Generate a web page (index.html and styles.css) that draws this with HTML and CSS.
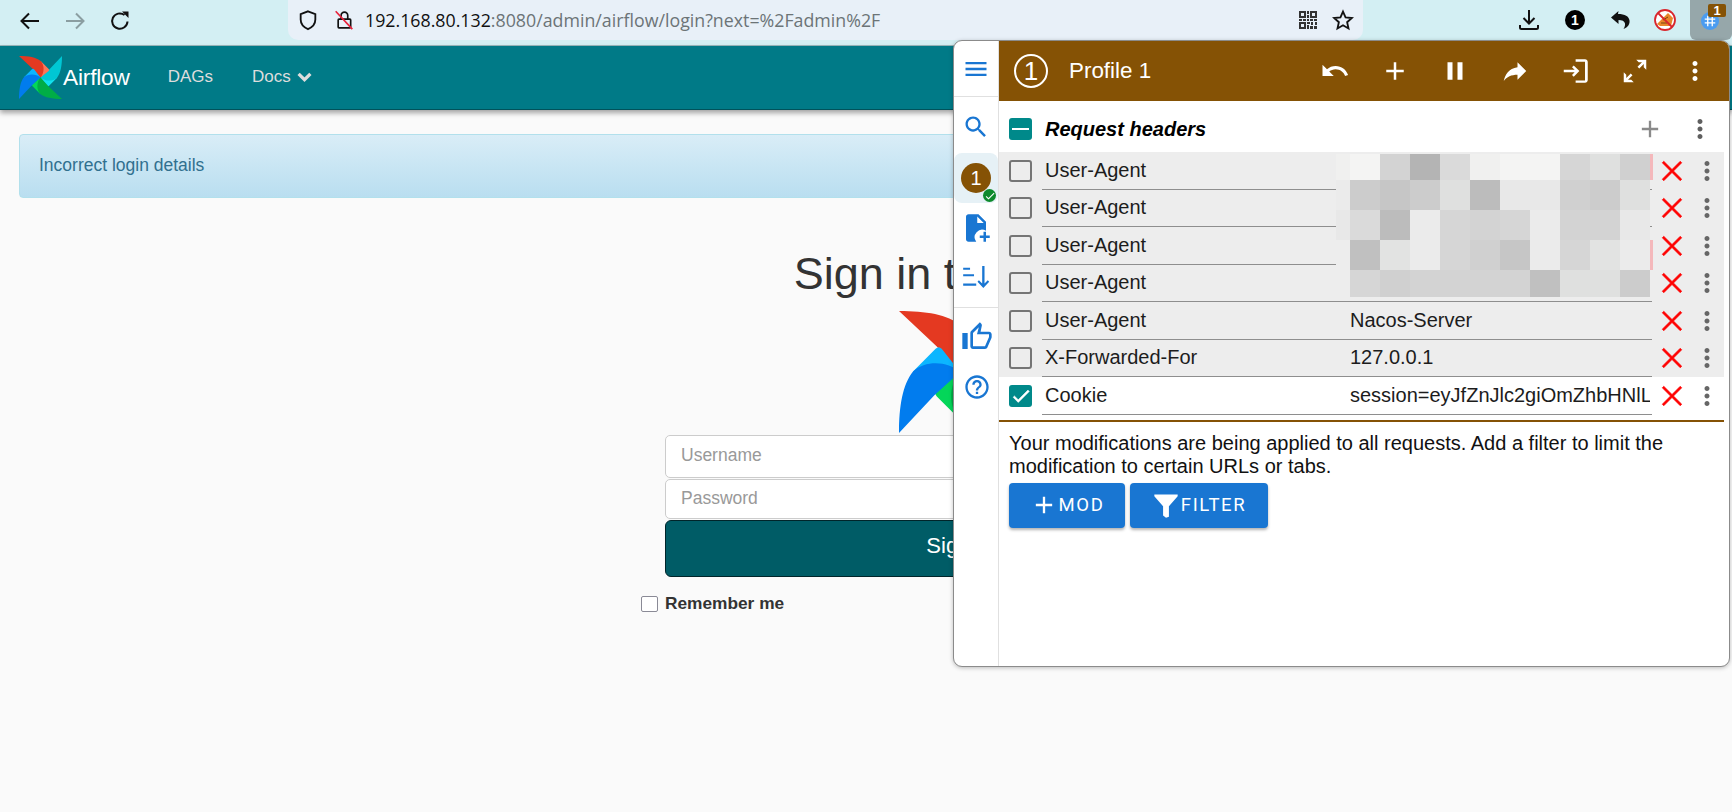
FILE: index.html
```html
<!DOCTYPE html>
<html lang="en">
<head>
<meta charset="utf-8">
<title>Airflow</title>
<link rel="stylesheet" href="styles.css">
</head>
<body>
<svg class="sprite" xmlns="http://www.w3.org/2000/svg">
  <defs>
    <symbol id="i-menu" viewBox="0 0 24 24"><path d="M3 18h18v-2H3v2zm0-5h18v-2H3v2zm0-7v2h18V6H3z"/></symbol>
    <symbol id="i-search" viewBox="0 0 24 24"><path d="M15.5 14h-.79l-.28-.27C15.41 12.59 16 11.11 16 9.5 16 5.91 13.09 3 9.5 3S3 5.91 3 9.5 5.91 16 9.5 16c1.61 0 3.09-.59 4.23-1.57l.27.28v.79l5 4.99L20.49 19l-4.99-5zm-6 0C7.01 14 5 11.99 5 9.5S7.01 5 9.5 5 14 7.01 14 9.5 11.99 14 9.5 14z"/></symbol>
    <symbol id="i-file" viewBox="0 0 24 24"><path d="M6 1h8l6 6v7.2a6 6 0 0 0-7.8 8.8H6c-1.1 0-2-.9-2-2V3c0-1.100.9-2 2-2zm7 1.800V8h5.200L13 2.800z"/><path d="M18 15h2v3h3v2h-3v3h-2v-3h-3v-2h3z"/></symbol>
    <symbol id="i-sort" viewBox="0 0 24 24"><path d="M1 4h5.900v1.800H1zM1 9.600h9.300v1.800H1zM1 17.600h11.200v1.800H1zM17.300 2.600h2v15l2.800-2.800 1.200 1.300-5 5.300-5-5.300 1.200-1.300 2.800 2.800z"/></symbol>
    <symbol id="i-thumb" viewBox="0 0 24 24"><path d="M9 21h9c.83 0 1.54-.5 1.84-1.22l3.02-7.05c.09-.23.14-.47.14-.73v-2c0-1.100-.9-2-2-2h-6.310l.95-4.570.03-.32c0-.41-.17-.79-.44-1.060L14.170 1 7.580 7.590C7.220 7.950 7 8.450 7 9v10c0 1.100.9 2 2 2zM9 9l4.340-4.340L12 10h9v2l-3 7H9V9zM1 9h4v12H1z"/></symbol>
    <symbol id="i-help" viewBox="0 0 24 24"><path d="M11 18h2v-2h-2v2zm1-16C6.480 2 2 6.480 2 12s4.480 10 10 10 10-4.480 10-10S17.520 2 12 2zm0 18c-4.410 0-8-3.590-8-8s3.590-8 8-8 8 3.590 8 8-3.590 8-8 8zm0-14c-2.210 0-4 1.790-4 4h2c0-1.100.9-2 2-2s2 .9 2 2c0 2-3 1.750-3 5h2c0-2.250 3-2.500 3-5 0-2.210-1.790-4-4-4z"/></symbol>
    <symbol id="i-undo" viewBox="0 0 24 24"><path d="M12.500 8c-2.650 0-5.050.99-6.900 2.600L2 7v9h9l-3.620-3.620c1.390-1.160 3.160-1.880 5.120-1.880 3.540 0 6.550 2.310 7.600 5.500l2.370-.78C21.080 11.030 17.150 8 12.500 8z"/></symbol>
    <symbol id="i-add" viewBox="0 0 24 24"><path d="M19 13h-6v6h-2v-6H5v-2h6V5h2v6h6v2z"/></symbol>
    <symbol id="i-pause" viewBox="0 0 24 24"><path d="M6 19h4V5H6v14zm8-14v14h4V5h-4z"/></symbol>
    <symbol id="i-redo" viewBox="0 0 24 24"><path d="M14 9V5l7 7-7 7v-4.100c-5 0-8.500 1.600-11 5.100 1-5 4-10 11-11z"/></symbol>
    <symbol id="i-login" viewBox="0 0 24 24"><path d="M11 7.500 9.600 8.900l2.100 2.100H3v2h8.700l-2.100 2.100 1.400 1.400 4.500-4.500zM20 19.500h-7.500v1.900H20c1.200 0 2.200-1 2.200-2.200V4.800c0-1.200-1-2.200-2.200-2.200h-7.500v1.900H20z"/></symbol>
    <symbol id="i-expand" viewBox="0 0 24 24"><path d="M13 3h8v8l-2-2V6.400l-3.600 3.600-1.400-1.400L17.600 5H15zM11 21H3v-8l2 2v2.600L8.600 14l1.400 1.400L6.400 19H9z"/></symbol>
    <symbol id="i-more" viewBox="0 0 24 24"><path d="M12 8c1.100 0 2-.9 2-2s-.9-2-2-2-2 .9-2 2 .9 2 2 2zm0 2c-1.100 0-2 .9-2 2s.9 2 2 2 2-.9 2-2-.9-2-2-2zm0 6c-1.100 0-2 .9-2 2s.9 2 2 2 2-.9 2-2-.9-2-2-2z"/></symbol>
    <symbol id="i-close" viewBox="0 0 24 24"><path d="M21 4.400 19.600 3 12 10.600 4.400 3 3 4.400 10.600 12 3 19.600 4.400 21 12 13.400 19.600 21 21 19.600 13.400 12z"/></symbol>
    <symbol id="i-filter" viewBox="0 0 24 24"><path d="M2 3h20v1.500L14.500 13v9L12 23l-2.500-2v-8L2 4.500z"/></symbol>
    <symbol id="i-check" viewBox="0 0 24 24"><path d="M9 16.170 4.830 12l-1.420 1.410L9 19 21 7l-1.410-1.410z"/></symbol>
    <g id="blade-blue"><path fill="#0cb6ff" d="M11.500 49.500 30 31q2.500-2.500 5 0l15 19-38.500 0z"/><path fill="#017cee" d="M0 100C0 78 3 60 11.500 49.500 22 40 40 41 50 50L29 69z"/></g>
    <g id="blade-red"><path fill="#ff7557" d="M11.500 49.500 30 31q2.500-2.500 5 0l15 19-38.500 0z"/><path fill="#e43921" d="M0 100C0 78 3 60 11.500 49.500 22 40 40 41 50 50L29 69z"/></g>
    <g id="blade-green"><path fill="#04d659" d="M11.500 49.500 30 31q2.500-2.500 5 0l15 19-38.500 0z"/><path fill="#00ad46" d="M0 100C0 78 3 60 11.500 49.500 22 40 40 41 50 50L29 69z"/></g>
    <g id="blade-teal"><path fill="#11e1ee" d="M11.500 49.500 30 31q2.500-2.500 5 0l15 19-38.500 0z"/><path fill="#00c7d4" d="M0 100C0 78 3 60 11.500 49.500 22 40 40 41 50 50L29 69z"/></g>
    <symbol id="logo" viewBox="0 0 100 100">
      <use href="#blade-teal" transform="rotate(180 50 50)"/>
      <use href="#blade-red" transform="rotate(90 50 50)"/>
      <use href="#blade-green" transform="rotate(-90 50 50)"/>
      <use href="#blade-blue"/>
    </symbol>
  </defs>
</svg>

<header class="chrome">
  <div class="nav-buttons">
    <svg class="chrome-icon" viewBox="0 0 24 24"><path class="stroke" d="M21 12H3.500M11 4.500 3.500 12l7.500 7.500"/></svg>
    <svg class="chrome-icon is-disabled" viewBox="0 0 24 24"><path class="stroke" d="M3 12h17.500M13 4.500l7.500 7.500-7.500 7.500"/></svg>
    <svg class="chrome-icon" viewBox="0 0 24 24"><path class="stroke" d="M19.500 12.500A7.700 7.700 0 1 1 16.500 6"/><path d="M14 2.500h6.500V9z"/></svg>
  </div>
  <div class="omnibox">
    <svg class="shield" viewBox="0 0 24 24"><path class="stroke" d="M12 2.500 20 5.500v6c0 5-3.500 8.500-8 10.500-4.500-2-8-5.500-8-10.500v-6z"/></svg>
    <svg class="lock" viewBox="0 0 24 24"><path class="stroke" d="M8.500 11V6.500a4 4 0 0 1 8 0V11M5 12q0-1 1-1h13q1 0 1 1v8.500q0 1-1 1H6q-1 0-1-1z"/><path class="slash" d="M2 1.500 22 23"/></svg>
    <span class="url"><span class="url-host">192.168.80.132</span>:8080/admin/airflow/login?next=%2Fadmin%2F</span>
    <span class="omni-end">
      <svg class="qr" viewBox="0 0 18 18"><path d="M0 0h7v7H0zm2 2v3h3V2zM11 0h7v7h-7zm2 2v3h3V2zM0 11h7v7H0zm2 2v3h3v-3zM8 0h2v3H8zM8 4h2v3H8zM0 8h3v2H0zM4 8h3v2H4zM8 8h2v2H8zM11 8h3v2h-3zM15 8h3v2h-3zM8 11h3v2H8zM12 11h2v3h-2zM16 11h2v3h-2zM8 14h2v4H8zM11 15h3v3h-3zM15 15h3v3h-3z"/></svg>
      <svg class="star" viewBox="0 0 24 24"><path class="stroke" d="M12 2.800l2.800 6.300 6.900.7-5.200 4.600 1.500 6.800-6-3.500-6 3.500 1.500-6.800-5.200-4.600 6.900-.7z"/></svg>
    </span>
  </div>
  <div class="extensions">
    <svg class="ext-icon" viewBox="0 0 24 24"><path class="stroke" d="M12 2v13M6.500 10l5.500 5.500 5.500-5.500M3 17v2.500q0 1.500 1.500 1.500h15q1.500 0 1.500-1.500V17"/></svg>
    <span class="ext-one">1</span>
    <svg class="ext-icon" viewBox="0 0 24 24"><path d="M10.500 3 3 9.500l7.500 6.500v-4c3.500 0 6 1 6.500 3.500.3 2-.4 3.700-1.500 5.500 4.500-1.500 6.500-5 6-8.500-.6-4.200-4.500-6.500-11.500-6.500z"/></svg>
    <svg class="ext-icon" viewBox="0 0 24 24"><circle cx="12" cy="12" r="10" fill="#fff"/><path d="M4 16 15 5l5 5-2 8H7z" fill="#e8862a"/><path d="M8 15h6M10 12l5-3" stroke="#7a4510" stroke-width="1" fill="none"/><circle cx="12" cy="12" r="10" fill="none" stroke="#d9262c" stroke-width="1.800"/><path d="M5 5l14 14" stroke="#d9262c" stroke-width="1.800"/></svg>
    <span class="ext-active">
      <svg class="ext-globe" viewBox="0 0 24 24"><circle cx="12" cy="12" r="12" fill="#4b9cf0"/><path d="M9 5v14M15 5v14M5 9.500h14M5 14.500h14" stroke="#fff" stroke-width="1.800" fill="none"/></svg>
      <span class="ext-badge">1</span>
    </span>
  </div>
</header>

<nav class="navbar">
  <a class="brand"><svg class="brand-logo"><use href="#logo"/></svg><span class="brand-text">Airflow</span></a>
  <a class="nav-link">DAGs</a>
  <a class="nav-link">Docs <svg class="chevron" viewBox="0 0 14 10"><path d="M1.500 2.500 7 8l5.500-5.500" fill="none" stroke="currentColor" stroke-width="3"/></svg></a>
</nav>

<main class="page">
  <div class="alert">Incorrect login details</div>
  <form class="login">
    <h1 class="login-title">Sign in to Airflow</h1>
    <svg class="login-logo"><use href="#logo"/></svg>
    <div class="field">Username</div>
    <div class="field field-second">Password</div>
    <div class="submit">Sign in</div>
    <label class="remember"><span class="remember-box"></span>Remember me</label>
  </form>
</main>

<section class="popup">
  <aside class="side">
    <div class="side-top"><svg class="side-icon"><use href="#i-menu"/></svg></div>
    <div class="side-group">
      <svg class="side-icon side-search"><use href="#i-search"/></svg>
      <div class="side-profile">
        <span class="profile-dot">1</span>
        <span class="profile-ok"><svg viewBox="0 0 24 24"><use href="#i-check"/></svg></span>
      </div>
      <svg class="side-icon side-file"><use href="#i-file"/></svg>
      <svg class="side-icon side-sort"><use href="#i-sort"/></svg>
    </div>
    <div class="side-group side-group-last">
      <svg class="side-icon side-thumb"><use href="#i-thumb"/></svg>
      <svg class="side-icon side-help"><use href="#i-help"/></svg>
    </div>
  </aside>
  <div class="panel">
    <header class="panel-head">
      <span class="head-number">1</span>
      <span class="head-title">Profile 1</span>
      <span class="head-actions">
        <svg class="head-icon"><use href="#i-undo"/></svg>
        <svg class="head-icon"><use href="#i-add"/></svg>
        <svg class="head-icon"><use href="#i-pause"/></svg>
        <svg class="head-icon"><use href="#i-redo"/></svg>
        <svg class="head-icon"><use href="#i-login"/></svg>
        <svg class="head-icon"><use href="#i-expand"/></svg>
        <svg class="head-icon"><use href="#i-more"/></svg>
      </span>
    </header>
    <div class="group-head">
      <span class="box box-on"><span class="box-minus"></span></span>
      <span class="group-title">Request headers</span>
      <svg class="group-add"><use href="#i-add"/></svg>
      <svg class="group-more"><use href="#i-more"/></svg>
    </div>
    <div class="rows">
      <div class="row"><span class="box"></span><div class="fields"><span class="name">User-Agent</span><span class="value"></span></div><svg class="del"><use href="#i-close"/></svg><svg class="more"><use href="#i-more"/></svg></div>
      <div class="row"><span class="box"></span><div class="fields"><span class="name">User-Agent</span><span class="value"></span></div><svg class="del"><use href="#i-close"/></svg><svg class="more"><use href="#i-more"/></svg></div>
      <div class="row"><span class="box"></span><div class="fields"><span class="name">User-Agent</span><span class="value"></span></div><svg class="del"><use href="#i-close"/></svg><svg class="more"><use href="#i-more"/></svg></div>
      <div class="row"><span class="box"></span><div class="fields"><span class="name">User-Agent</span><span class="value"></span></div><svg class="del"><use href="#i-close"/></svg><svg class="more"><use href="#i-more"/></svg></div>
      <div class="row"><span class="box"></span><div class="fields"><span class="name">User-Agent</span><span class="value">Nacos-Server</span></div><svg class="del"><use href="#i-close"/></svg><svg class="more"><use href="#i-more"/></svg></div>
      <div class="row"><span class="box"></span><div class="fields"><span class="name">X-Forwarded-For</span><span class="value">127.0.0.1</span></div><svg class="del"><use href="#i-close"/></svg><svg class="more"><use href="#i-more"/></svg></div>
      <div class="row row-on"><span class="box box-on"><svg class="box-check"><use href="#i-check"/></svg></span><div class="fields"><span class="name">Cookie</span><span class="value">session=eyJfZnJlc2giOmZhbHNlLCJfaWQiOiIxIn0</span></div><svg class="del"><use href="#i-close"/></svg><svg class="more"><use href="#i-more"/></svg></div>
      <div class="mosaic">
        <i class="f0"></i><i class="f4"></i><i class="ce"></i><i class="b0"></i><i class="d6"></i><i class="f0"></i><i class="f4"></i><i class="f4"></i><i class="d2"></i><i class="dc"></i><i class="ca"></i><i class="pink"></i>
        <i class="ea"></i><i class="c6"></i><i class="c0"></i><i class="c6"></i><i class="dc"></i><i class="b8"></i><i class="e6"></i><i class="e6"></i><i class="ca"></i><i class="c6"></i><i class="dc"></i><i></i>
        <i class="e6"></i><i class="d6"></i><i class="b8"></i><i class="ea"></i><i class="d2"></i><i class="ce"></i><i class="d2"></i><i class="ea"></i><i class="ce"></i><i class="ce"></i><i class="e6"></i><i></i>
        <i class="rowbg"></i><i class="bc"></i><i class="e0"></i><i class="ea"></i><i class="d2"></i><i class="ca"></i><i class="c0"></i><i class="ea"></i><i class="d2"></i><i class="e0"></i><i class="ea"></i><i class="pink"></i>
        <i></i><i class="d2"></i><i class="ca"></i><i class="ce"></i><i class="ce"></i><i class="ce"></i><i class="ce"></i><i class="bc"></i><i class="dc"></i><i class="dc"></i><i class="c6"></i><i></i>
      </div>
    </div>
    <div class="rule"></div>
    <p class="note">Your modifications are being applied to all requests. Add a filter to limit the modification to certain URLs or tabs.</p>
    <div class="actions">
      <span class="btn btn-mod"><svg class="btn-icon"><use href="#i-add"/></svg>MOD</span>
      <span class="btn btn-filter"><svg class="btn-icon btn-icon-filter"><use href="#i-filter"/></svg>FILTER</span>
    </div>
  </div>
</section>
</body>
</html>
```

FILE: styles.css
```css
* { box-sizing: border-box; }
html, body { margin: 0; height: 100%; }
body {
  position: relative;
  height: 812px;
  overflow: hidden;
  background: #fafafa;
  font-family: "Liberation Sans", Arial, sans-serif;
  color: #333;
}
.sprite { position: absolute; width: 0; height: 0; }
.stroke { fill: none; stroke: currentColor; stroke-width: 2; }

/* browser chrome */
.chrome {
  display: flex;
  align-items: flex-start;
  height: 46px;
  background: #d3eff3;
  border-bottom: 1px solid #9ab8bc;
  color: #111;
}
.nav-buttons { display: flex; gap: 21px; width: 288px; padding: 9px 0 0 18px; }
.chrome-icon { width: 24px; height: 24px; fill: currentColor; }
.is-disabled { color: #8b9ea1; }
.omnibox {
  display: flex;
  align-items: center;
  width: 1075px;
  height: 40px;
  padding-left: 9px;
  background: #e8f0f8;
  border-radius: 0 0 10px 10px;
}
.shield { width: 22px; height: 22px; }
.lock { width: 20px; height: 22px; margin-left: 15px; }
.lock .slash { fill: none; stroke: #e8213a; stroke-width: 2; }
.url { margin-left: 11px; font: 17.800px "Open Sans", sans-serif; color: #6c7477; white-space: nowrap; }
.url-host { color: #111; }
.omni-end { display: flex; align-items: center; gap: 15px; margin-left: auto; padding-right: 9px; }
.qr { width: 18px; height: 18px; fill: #333; }
.star { width: 22px; height: 22px; }
.extensions { display: flex; align-items: center; height: 40px; flex: 1; padding-left: 154px; gap: 21px; }
.ext-icon { width: 24px; height: 24px; fill: currentColor; flex: none; }
.ext-one {
  width: 20px; height: 20px;
  margin: 0 2px 0 3px;
  flex: none;
  border-radius: 50%;
  background: #000; color: #fff;
  font: bold 14px/20px "Liberation Sans", sans-serif;
  text-align: center;
}
.ext-active {
  position: relative;
  width: 42px; height: 40px;
  margin-left: -8px;
  flex: none;
  background: #96a7aa;
  border-radius: 0 0 6px 6px;
}
.ext-globe { position: absolute; left: 11px; top: 12px; width: 18px; height: 18px; }
.ext-badge {
  position: absolute; left: 18px; top: 4px;
  width: 18px; height: 13px;
  border-radius: 2px;
  background: #855205; color: #fff;
  font: bold 13px/13px "Liberation Sans", sans-serif;
  text-align: center;
}

/* airflow navbar */
.navbar {
  display: flex;
  align-items: center;
  height: 64px;
  padding: 0 0 1px 19px;
  background: #007a87;
  border-bottom: 1px solid #00525b;
  box-shadow: 0 3px 5px rgba(0, 0, 0, .35);
  color: #ddd;
  font-size: 17px;
}
.brand { display: flex; align-items: center; color: #fff; margin-right: 38px; }
.brand-logo { width: 43px; height: 43px; }
.brand-text { font-size: 22.700px; letter-spacing: -.2px; margin-left: 1px; }
.nav-link { margin-right: 39px; }
.chevron { width: 15px; height: 11px; margin-left: 1px; }

/* login page */
.page { padding: 24px 20px 0 19px; }
.alert {
  height: 64px;
  padding-left: 19px;
  line-height: 61px;
  font-size: 17.500px;
  color: #31708f;
  background: linear-gradient(#d9edf7, #b9def0);
  border: 1px solid #b2e0ec;
  border-radius: 4px;
}
.login { position: relative; width: 590px; margin-left: 646px; }
.login-title {
  margin: 49px 0 0;
  font-size: 45px;
  font-weight: 400;
  line-height: 54px;
  text-align: center;
  color: #333;
}
.login-logo { display: block; width: 122px; height: 122px; margin: 10px auto 2px; }
.field {
  height: 43px;
  padding-left: 15px;
  line-height: 38px;
  font-size: 17.500px;
  color: #999;
  background: #fff;
  border: 1px solid #ccc;
  border-radius: 5px;
}
.field-second { height: 40px; margin-top: 1px; line-height: 36px; }
.submit {
  height: 57px;
  margin-top: 1px;
  line-height: 50px;
  text-align: center;
  font-size: 22px;
  color: #fff;
  background: #005c66;
  border: 1px solid #00252a;
  border-radius: 6px;
}
.remember {
  position: absolute;
  left: 0; top: 346px;
  display: flex; align-items: center;
  font-size: 17.300px;
  font-weight: 700;
}
.remember-box {
  position: absolute;
  left: -24px;
  width: 17px; height: 16px;
  background: #fff;
  border: 1.500px solid #8a8a96;
  border-radius: 2px;
}

/* extension popup */
.popup {
  position: absolute;
  left: 953px; top: 40px;
  display: flex;
  width: 777px; height: 627px;
  background: #fff;
  border: 1px solid #8b8b8b;
  border-radius: 9px;
  overflow: hidden;
  box-shadow: 0 1px 4px rgba(0, 0, 0, .25);
  color: #1c1c1c;
}
.side {
  display: flex;
  flex-direction: column;
  align-items: center;
  width: 45px;
  flex: none;
  border-right: 1px solid #e0e0e0;
  fill: #1976d2;
}
.side-icon { display: block; width: 28px; height: 28px; flex: none; }
.side-top { width: 100%; height: 56px; padding-top: 14px; display: flex; justify-content: center; border-bottom: 1px solid #e0e0e0; }
.side-group { width: 100%; display: flex; flex-direction: column; align-items: center; height: 211px; border-bottom: 1px solid #e0e0e0; }
.side-group-last { border-bottom: 0; }
.side-search { margin-top: 16px; }
.side-profile { position: relative; width: 100%; height: 50px; margin-top: 12px; background: #e6f1f6; border-radius: 8px; flex: none; }
.profile-dot {
  position: absolute; left: 7px; top: 10px;
  width: 30px; height: 30px;
  border-radius: 50%;
  background: #855205; color: #fff;
  font-size: 20px; line-height: 30px; text-align: center;
}
.profile-ok {
  position: absolute; left: 29px; top: 36px;
  width: 13px; height: 13px;
  border-radius: 50%;
  background: #0d8a2c;
  fill: #fff;
  display: flex; align-items: center; justify-content: center;
}
.profile-ok svg { width: 12px; height: 12px; }
.side-file { margin-top: 10px; width: 30px; height: 30px; }
.side-sort { margin-top: 20px; }
.side-thumb { margin-top: 13px; margin-left: 1px; width: 32px; height: 32px; }
.side-help { margin-top: 20px; margin-left: 1px; }

.panel { width: 725px; flex: none; }
.panel-head {
  display: flex;
  align-items: center;
  height: 60px;
  padding-left: 15px;
  background: #855205;
  color: #fff;
  fill: #fff;
  width: 731px;
}
.head-number {
  width: 34px; height: 34px;
  border: 2px solid #fff;
  border-radius: 50%;
  font-size: 26px; font-weight: 400;
  line-height: 30px; text-align: center;
}
.head-title { margin-left: 21px; font-size: 22.400px; }
.head-actions { display: flex; gap: 30px; margin-left: auto; margin-right: 20px; }
.head-icon { width: 30px; height: 30px; }

.group-head { display: flex; align-items: center; height: 51px; padding: 5px 0 0 10px; }
.group-title { margin-left: 13px; font-size: 20px; font-weight: 700; font-style: italic; color: #000; }
.group-add { width: 28px; height: 28px; margin-left: auto; fill: #8a8a8a; }
.group-more { width: 30px; height: 30px; margin-left: 21px; margin-right: 9px; fill: #5f5f5f; }

.box {
  display: flex; align-items: center; justify-content: center;
  width: 23px; height: 22px;
  flex: none;
  border: 2px solid #757575;
  border-radius: 3px;
}
.box-on { background: #00898a; border: 0; border-color: transparent; }
.box-minus { width: 17px; height: 2px; background: #fff; }
.box-check { width: 22px; height: 22px; fill: #fff; stroke: #fff; stroke-width: .6; }

.rows { position: relative; }
.row {
  display: flex;
  align-items: center;
  height: 37.500px;
  padding-left: 10px;
  background: #ededed;
  font-size: 20px;
}
.row-on { background: #fff; }
.fields {
  display: flex;
  align-items: center;
  width: 610px;
  height: 100%;
  margin-left: 10px;
  border-bottom: 1.500px solid #8e8e8e;
}
.name { width: 308px; flex: none; padding-left: 3px; }
.value { width: 300px; overflow: hidden; white-space: nowrap; }
.del { width: 26px; height: 26px; margin-left: 7px; fill: #f00; stroke: #f00; stroke-width: .6; flex: none; }
.more { width: 30px; height: 30px; margin-left: 7px; fill: #666; flex: none; }

.mosaic {
  position: absolute;
  left: 337px; top: 2px;
  display: grid;
  grid-template-columns: 14px repeat(10, 30px) 3px;
  grid-template-rows: 26px 30px 30px 30px 27px;
}
.f4 { background: #f4f4f3; } .f0 { background: #f0f0ef; } .ea { background: #ebebeb; }
.e6 { background: #e8e8e8; } .e0 { background: #e2e3e2; } .dc { background: #dfe0df; }
.d6 { background: #dadada; } .d2 { background: #d6d6d6; } .ce { background: #d3d3d3; }
.ca { background: #d0d0d0; } .c6 { background: #cccccc; } .c0 { background: #c6c6c6; }
.bc { background: #c0c0c0; } .b8 { background: #bcbcbc; } .b0 { background: #b4b4b4; }
.pink { background: #f4b8bb; } .rowbg { background: #ededed; }

.rule { height: 2px; margin-top: 5px; background: #855205; }
.note { margin: 10px 0 0 10px; width: 700px; font-size: 20px; line-height: 23px; color: #111; }
.actions { display: flex; gap: 5px; margin: 5px 0 0 10px; }
.btn {
  display: flex; align-items: center; justify-content: center;
  height: 45px;
  background: #1976d2;
  color: #fff; fill: #fff;
  border-radius: 4px;
  font-family: Roboto, sans-serif;
  font-size: 18.500px; font-weight: 400;
  letter-spacing: 1.600px;
  box-shadow: 0 2px 3px rgba(0, 0, 0, .3);
}
.btn-mod { width: 116px; }
.btn-filter { width: 138px; }
.btn-icon { width: 28px; height: 28px; margin-right: 1px; }
```
